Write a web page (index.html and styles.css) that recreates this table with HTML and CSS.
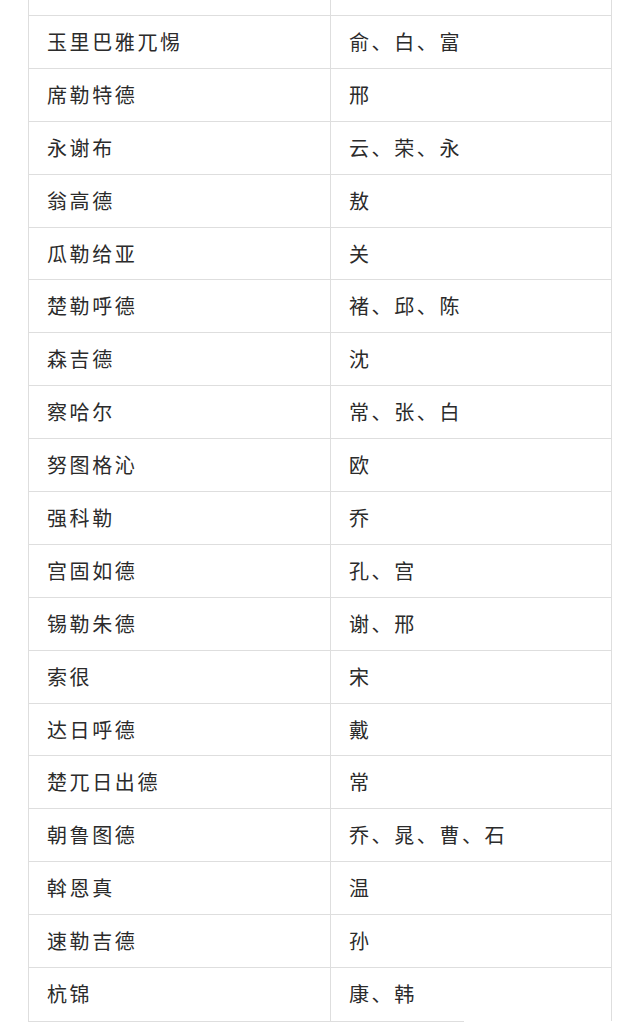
FILE: index.html
```html
<!DOCTYPE html>
<html lang="zh">
<head>
<meta charset="utf-8">
<link rel="stylesheet" href="styles.css">
</head>
<body>
<div class="table">
  <div class="row cut"><div class="cell"></div><div class="cell"></div></div>
  <div class="row"><div class="cell">玉里巴雅兀惕</div><div class="cell">俞、白、富</div></div>
  <div class="row"><div class="cell">席勒特德</div><div class="cell">邢</div></div>
  <div class="row"><div class="cell">永谢布</div><div class="cell">云、荣、永</div></div>
  <div class="row"><div class="cell">翁高德</div><div class="cell">敖</div></div>
  <div class="row"><div class="cell">瓜勒给亚</div><div class="cell">关</div></div>
  <div class="row"><div class="cell">楚勒呼德</div><div class="cell">褚、邱、陈</div></div>
  <div class="row"><div class="cell">森吉德</div><div class="cell">沈</div></div>
  <div class="row"><div class="cell">察哈尔</div><div class="cell">常、张、白</div></div>
  <div class="row"><div class="cell">努图格沁</div><div class="cell">欧</div></div>
  <div class="row"><div class="cell">强科勒</div><div class="cell">乔</div></div>
  <div class="row"><div class="cell">宫固如德</div><div class="cell">孔、宫</div></div>
  <div class="row"><div class="cell">锡勒朱德</div><div class="cell">谢、邢</div></div>
  <div class="row"><div class="cell">索很</div><div class="cell">宋</div></div>
  <div class="row"><div class="cell">达日呼德</div><div class="cell">戴</div></div>
  <div class="row"><div class="cell">楚兀日出德</div><div class="cell">常</div></div>
  <div class="row"><div class="cell">朝鲁图德</div><div class="cell">乔、晁、曹、石</div></div>
  <div class="row"><div class="cell">斡恩真</div><div class="cell">温</div></div>
  <div class="row"><div class="cell">速勒吉德</div><div class="cell">孙</div></div>
  <div class="row last"><div class="cell">杭锦</div><div class="cell">康、韩</div></div>
  <div class="bottom-line"></div>
</div>
</body>
</html>
```

FILE: styles.css
```css
html, body {
  margin: 0;
  padding: 0;
  background: #ffffff;
}
body {
  font-family: "Noto Sans CJK SC", "Noto Sans", sans-serif;
  color: #2b2b2b;
  overflow: hidden;
}
.table {
  margin-left: 28px;
  width: 584px;
  display: flex;
  flex-direction: column;
}
.row {
  display: grid;
  grid-template-columns: 302px 282px;
  height: 52.9px;
  box-sizing: border-box;
  border-bottom: 1px solid #dedede;
}
.row.cut {
  height: 16px;
}
.row.last {
  border-bottom: none;
}
.cell {
  display: flex;
  align-items: center;
  padding-left: 18px;
  font-size: 20px;
  letter-spacing: 2.6px;
  line-height: 1;
  border-left: 1px solid #dedede;
  box-sizing: border-box;
}
.cell + .cell {
  border-right: 1px solid #dedede;
}
.bottom-line {
  width: 436px;
  height: 1px;
  background: #dedede;
}
```
